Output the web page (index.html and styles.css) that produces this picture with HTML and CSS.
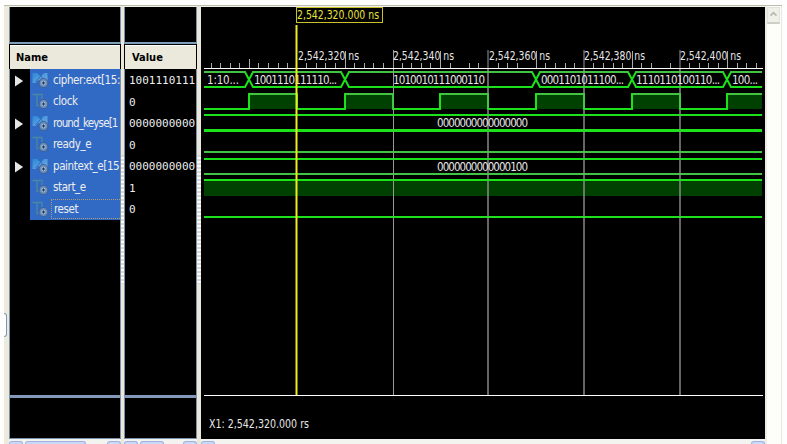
FILE: index.html
```html
<!DOCTYPE html>
<html lang="en">
<head>
<meta charset="utf-8">
<title>Waveform viewer</title>
<link rel="stylesheet" href="styles.css">
</head>
<body>
<svg class="defs" width="0" height="0">
  <defs>
    <linearGradient id="busFill" x1="0" y1="0" x2="1" y2="1"><stop offset="0" stop-color="#2b87d8"/><stop offset="1" stop-color="#79aee0"/></linearGradient>
    <g id="badge"><circle cx="11" cy="12" r="4.500" fill="#6f8fb8" stroke="#375e96"/><circle cx="11" cy="12" r="2.200" fill="#a4b9d0"/><path d="M9.500 12h3M11 10.500v3" stroke="#123568"/></g>
    <symbol id="bus" viewBox="0 0 16 18"><path d="M0 2h5l3 3 3-3h4v9H9l-3-2-3 3H0z" fill="url(#busFill)"/><path d="M5 2l5 5M11 2L3 11" stroke="#2a6fc4" stroke-width="1"/><use href="#badge"/></symbol>
    <symbol id="wire" viewBox="0 0 16 18"><path d="M0 2.500h4.500v11h3M4.500 2.500h5v5" fill="none" stroke="#4b87a3" stroke-width="1.300"/><use href="#badge"/></symbol>
    <symbol id="arrow" viewBox="0 0 10 12"><path d="M0 0l9 6-9 6z" fill="#e6e6e6"/></symbol>
  </defs>
</svg>
<div class="viewer">
  <div class="edge"><i class="grip"></i></div>
  <section class="pane names">
    <div class="blank"></div>
    <h2>Name</h2>
    <ul>
      <li><svg class="arrow"><use href="#arrow"/></svg><div class="sel"><svg><use href="#bus"/></svg><span>cipher:ext[15:</span></div></li>
      <li><div class="sel"><svg><use href="#wire"/></svg><span>clock</span></div></li>
      <li><svg class="arrow"><use href="#arrow"/></svg><div class="sel"><svg><use href="#bus"/></svg><span class="tight">round_keyse[1</span></div></li>
      <li><div class="sel"><svg><use href="#wire"/></svg><span>ready_e</span></div></li>
      <li><svg class="arrow"><use href="#arrow"/></svg><div class="sel"><svg><use href="#bus"/></svg><span>paintext_e[15</span></div></li>
      <li><div class="sel"><svg><use href="#wire"/></svg><span>start_e</span></div></li>
      <li><div class="sel"><svg><use href="#wire"/></svg><span class="focus">reset</span></div></li>
    </ul>
    <div class="foot"></div>
    <div class="hscroll"><i class="cap"></i><i class="thumb wide"></i><i class="cap end"></i></div>
  </section>
  <div class="split"></div>
  <section class="pane values">
    <div class="blank"></div>
    <h2>Value</h2>
    <ul>
      <li>1001110111</li><li>0</li><li>0000000000</li><li>0</li><li>0000000000</li><li>1</li><li>0</li>
    </ul>
    <div class="foot"></div>
    <div class="hscroll"><i class="cap"></i><i class="thumb"></i><i class="cap end"></i></div>
  </section>
  <div class="split"></div>
  <section class="wave">
    <svg class="plot" viewBox="201 7 564 432" width="564" height="432">
      <g fill="#004000"><path d="M249 94h48v15h-48zM345 94h48v15h-48zM440 94h48v15h-48zM536 94h48v15h-48zM632 94h48v15h-48zM727 94h35v15h-35zM204 181h558v15H204z"/></g>
      <path class="tick" d="M211.500 63v5M220.500 63v5M230.500 63v5M239.500 63v5M249.500 59v9M258.500 63v5M268.500 63v5M278.500 63v5M287.500 63v5M306.500 63v5M316.500 63v5M325.500 63v5M335.500 63v5M345.500 51v17M354.500 63v5M364.500 63v5M373.500 63v5M383.500 63v5M402.500 63v5M411.500 63v5M421.500 63v5M430.500 63v5M440.500 51v17M450.500 63v5M469.500 63v5M478.500 63v5M498.500 63v5M507.500 63v5M517.500 63v5M536.500 51v17M545.500 63v5M555.500 63v5M565.500 63v5M574.500 63v5M593.500 63v5M603.500 63v5M613.500 63v5M622.500 63v5M632.500 51v17M641.500 63v5M651.500 63v5M670.500 63v5M689.500 63v5M699.500 63v5M708.500 63v5M718.500 63v5M727.500 51v17M737.500 63v5M746.500 63v5M756.500 63v5"/>
      <path class="grid" d="M393.500 50v345M488 50v345M584 50v345M680 50v345"/>
      <g class="green">
        <path d="M204 87h41l8-15h88l8 15h183l8-15h88l8 15h87l8-15h31"/>
        <path d="M204 72h41l8 15h88l8-15h183l8 15h88l8-15h87l8 15h31"/>
        <path d="M204 109h45V94h48v15h48V94h48v15h47V94h48v15h48V94h48v15h48V94h48v15h47V94h35"/>
        <path d="M204 115h558M204 159h558M204 180h558M204 217h558"/>
        <path class="thick" d="M204 130.500h558"/>
        <path class="soft" d="M204 152h558M204 174h558M250 94h46M346 94h46M441 94h46M537 94h46M633 94h46M728 94h34M204 72h41M253 72h88M349 72h183M540 72h88M636 72h87M731 72h31"/>
      </g>
      <path class="grid over" d="M393.500 68v327M488 68v327M584 68v327M680 68v327"/>
      <path class="base" d="M204 68.500h559M204 395.500h559"/>
      <g class="label">
        <text x="298" y="60" textLength="61" lengthAdjust="spacingAndGlyphs">2,542,320 ns</text>
        <text x="393" y="60" textLength="61" lengthAdjust="spacingAndGlyphs">2,542,340 ns</text>
        <text x="489" y="60" textLength="61" lengthAdjust="spacingAndGlyphs">2,542,360 ns</text>
        <text x="584" y="60" textLength="61" lengthAdjust="spacingAndGlyphs">2,542,380 ns</text>
        <text x="680" y="60" textLength="61" lengthAdjust="spacingAndGlyphs">2,542,400 ns</text>
        <text x="207" y="84" textLength="32">1:10...</text>
        <text x="254" y="84" textLength="83">1001110111110...</text>
        <text x="393" y="84" textLength="92">1010010111000110</text>
        <text x="541" y="84" textLength="83">0001101011100...</text>
        <text x="636" y="84" textLength="84">1110110100110...</text>
        <text x="732" y="84" textLength="26">100...</text>
        <text x="437" y="127" textLength="91">0000000000000000</text>
        <text x="437" y="171" textLength="91">0000000000000100</text>
        <text x="209" y="428" textLength="100" lengthAdjust="spacingAndGlyphs">X1: 2,542,320.000 rs</text>
      </g>
      <path class="cursor" d="M296.500 25v370"/>
      <rect class="flag" x="296.500" y="7.500" width="86" height="15"/>
      <text class="flagtext" x="297" y="19" textLength="82" lengthAdjust="spacingAndGlyphs">2,542,320.000 ns</text>
    </svg>
    <div class="hscroll"><i class="cap"></i><i class="cap end"></i></div>
  </section>
  <div class="vscroll"><div class="up"><svg viewBox="0 0 13 15"><path d="M3 9l3.500-3.500L10 9" fill="none" stroke="#b9b8b1" stroke-width="2"/></svg></div></div>
</div>
</body>
</html>
```
FILE: styles.css
```css
* { box-sizing: border-box; }
body {
  margin: 0;
  width: 787px;
  height: 444px;
  overflow: hidden;
  background: #fefefe;
  color: #eee;
  font: 11.5px "DejaVu Sans Condensed", "DejaVu Sans", sans-serif;
}
.defs { position: absolute; }
.viewer {
  display: flex;
  width: 778px;
  height: 439px;
  margin: 5px 0 0 4px;
  border-top: 1px solid #bdbcae;
  background: #f1f1ec;
}
.edge {
  display: flex;
  align-items: flex-start;
  width: 5px;
  background: #ebeadb;
}
.grip {
  width: 3px;
  height: 24px;
  margin-top: 307px;
  background: #fff;
  border: 1px solid #7a96b8;
  border-left: 0;
  border-radius: 0 3px 3px 0;
}
.pane {
  display: flex;
  flex-direction: column;
  padding-top: 1px;
}
.names { width: 112px; }
.values { width: 73px; }
.blank {
  height: 37px;
  background: #000;
  border: 1px solid #7a93aa;
  border-top: 0;
  border-bottom: 2px solid #809db8;
}
.pane h2 {
  height: 25px;
  margin: 0;
  padding: 0 0 0 6px;
  background: #eae9db;
  border: solid #000;
  border-width: 1px 1px 0;
  box-shadow: inset 0 1px #fff;
  color: #000;
  font: bold 11px/26px "DejaVu Sans Condensed", sans-serif;
  white-space: nowrap;
}
.values h2 { padding-left: 7px; }
.pane ul {
  height: 326px;
  margin: 0;
  padding: 0;
  list-style: none;
  background: #000;
  border: solid #7a93aa;
  border-width: 0 1px;
}
.pane li {
  display: flex;
  align-items: center;
  justify-content: flex-end;
  height: 21.5px;
  overflow: hidden;
  white-space: nowrap;
}
.values li {
  justify-content: flex-start;
  padding: 2px 0 0 4px;
  font-family: "DejaVu Sans Mono", monospace;
  font-size: 11px;
}
.arrow {
  width: 9px;
  height: 12px;
  margin: 3px 6px 0 0;
}
.sel {
  display: flex;
  align-items: center;
  width: 90px;
  height: 22px;
  padding-left: 2px;
  overflow: hidden;
  background: #316ac5;
  letter-spacing: -.4px;
}
.sel svg {
  flex: none;
  width: 17px;
  height: 18px;
}
.sel span {
  flex: 1;
  height: 20px;
  line-height: 21px;
  padding-left: 4px;
}
.sel .tight { letter-spacing: -.85px; }
.sel .focus {
  margin-left: 2px;
  padding-left: 2px;
  border: 1px dotted #b39b70;
  border-right: 0;
  line-height: 19px;
}
.foot {
  height: 44px;
  background: #000;
  border: 1px solid #7a93aa;
  border-top: 3px solid #8499b8;
}
.split {
  width: 4px;
  background: repeating-linear-gradient(#d8d8d4 0 2px, #fafaf7 2px 4px) 0 149px / 4px 129px no-repeat, #ebe7db;
}
.names + .split { width: 3px; }
.wave {
  display: flex;
  flex-direction: column;
  width: 564px;
  padding-top: 1px;
}
.plot {
  display: block;
  background: #000;
}
.green path { fill: none; stroke: #1be21b; stroke-width: 2; }
.green .soft { stroke: #42c442; }
.green .thick { stroke-width: 3; }
.tick { stroke: #aaa; }
.grid { stroke: #989898; stroke-width: 1; }
.over { opacity: .7; }
.base { stroke: #fff; }
.cursor { stroke: #f0ec20; stroke-width: 2; }
.label { fill: #e6e6e6; font-size: 11.5px; }
.flag { fill: #000; stroke: #c8c32b; }
.flagtext { fill: #e8e33a; font-size: 11.5px; }
.hscroll {
  display: flex;
  gap: 2px;
  height: 5px;
  padding-top: 2px;
  background: #f3f3ef;
}
.hscroll i {
  height: 4px;
  background: #cbd8f7;
  border: 1px solid #9db2df;
  border-bottom: 0;
  border-radius: 3px 3px 0 0;
}
.hscroll .cap { width: 14px; }
.hscroll .thumb { width: 24px; }
.hscroll .wide { width: 61px; }
.hscroll .end { margin-left: auto; }
.vscroll {
  width: 17px;
  padding: 1px 0 0 2px;
  border-right: 1px solid #e8e8e2;
  background: linear-gradient(90deg, #eeede5 2px, #fdfdfa 2px);
}
.up {
  width: 13px;
  height: 17px;
  background: #f0f0eb;
  border: 1px solid #e3e2da;
  border-bottom: 2px solid #cfcec6;
}
.up svg { display: block; }
```
